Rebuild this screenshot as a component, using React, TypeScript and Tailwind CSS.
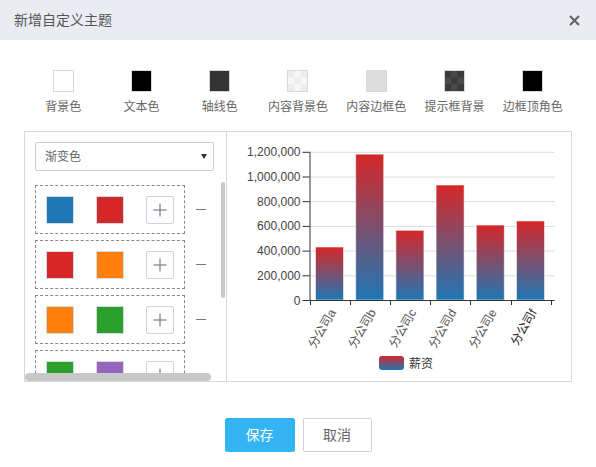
import React from "react";

const FONT = '"Liberation Sans", "Noto Sans CJK SC", Arial, sans-serif';

function Checker({ a, b }: { a: string; b: string }) {
  const cells = [];
  for (let r = 0; r < 3; r++)
    for (let c = 0; c < 3; c++)
      cells.push(
        <rect key={`${r}-${c}`} x={c * 7} y={r * 7.33} width={7} height={7.34} fill={(r + c) % 2 === 0 ? a : b} />
      );
  return (
    <svg width="100%" height="100%" viewBox="0 0 21 22" preserveAspectRatio="none">
      {cells}
    </svg>
  );
}

const topSwatches: { label: string; node: React.ReactNode; cls: string }[] = [
  { label: "背景色", node: null, cls: "bg-white" },
  { label: "文本色", node: null, cls: "bg-black" },
  { label: "轴线色", node: null, cls: "bg-[#333333]" },
  { label: "内容背景色", node: <Checker a="#ececec" b="#f7f7f7" />, cls: "bg-[#f2f2f2]" },
  { label: "内容边框色", node: null, cls: "bg-[#dddddd]" },
  { label: "提示框背景", node: <Checker a="#3a3a3a" b="#4a4a4a" />, cls: "bg-[#404040]" },
  { label: "边框顶角色", node: null, cls: "bg-black" },
];

const groups: [string, string][] = [
  ["#1f77b4", "#d62728"],
  ["#d62728", "#ff7f0e"],
  ["#ff7f0e", "#2ca02c"],
  ["#2ca02c", "#9467bd"],
];

const data = [
  { name: "分公司a", v: 429000 },
  { name: "分公司b", v: 1181000 },
  { name: "分公司c", v: 564000 },
  { name: "分公司d", v: 931000 },
  { name: "分公司e", v: 607000 },
  { name: "分公司f", v: 640000 },
];

function Chart() {
  const x0 = 82.5;
  const xEnd = 323.7;
  const band = (xEnd - x0) / 6;
  const yZero = 168;
  const yTop = 19.8;
  const max = 1200000;
  const sy = (v: number) => yZero - ((yZero - yTop) * v) / max;
  const ticks = [0, 200000, 400000, 600000, 800000, 1000000, 1200000];
  return (
    <svg width="344" height="249" viewBox="0 0 344 249" style={{ fontFamily: FONT }}>
      <defs>
        <linearGradient id="g" x1="0" y1="0" x2="0" y2="1">
          <stop offset="0%" stopColor="#d62728" />
          <stop offset="100%" stopColor="#1f77b4" />
        </linearGradient>
      </defs>
      {ticks.map((t) => (
        <g key={t}>
          {t > 0 && <line x1={x0} x2={xEnd + 4} y1={sy(t) + 0.5} y2={sy(t) + 0.5} stroke="#dcdcdc" />}
          <line x1={x0 - 7} x2={x0} y1={sy(t) + 0.5} y2={sy(t) + 0.5} stroke="#333" />
          <text x={x0 - 9} y={sy(t) + 4.5} textAnchor="end" fontSize="12" fill="#444">
            {t.toLocaleString("en-US")}
          </text>
        </g>
      ))}
      {data.map((d, i) => {
        const bx = x0 + band * i + 6;
        const top = sy(d.v);
        return (
          <rect
            key={d.name}
            x={bx}
            y={top}
            width={28}
            height={yZero - top}
            fill="url(#g)"
            stroke="rgba(255,255,255,0.55)"
            strokeWidth={1}
          />
        );
      })}
      <line x1={x0 + 0.5} x2={x0 + 0.5} y1={yTop} y2={yZero + 0.5} stroke="#333" />
      <line x1={x0} x2={xEnd + 4} y1={yZero + 0.5} y2={yZero + 0.5} stroke="#333" />
      {Array.from({ length: 7 }).map((_, i) => {
        const x = Math.round(x0 + band * i) + 0.5;
        return <line key={i} x1={x} x2={x} y1={yZero} y2={yZero + 5} stroke="#333" />;
      })}
      {data.map((d, i) => {
        const cx = x0 + band * i + band / 2 + 3;
        return (
          <text
            key={d.name}
            transform={`translate(${cx},${yZero + 10}) rotate(-60)`}
            textAnchor="end"
            dy="0.35em"
            fontSize="12"
            fill={i === 5 ? "#222" : "#555"}
          >
            {d.name}
          </text>
        );
      })}
      <rect x={152} y={224} width={25} height={14} rx={3} fill="url(#g)" />
      <text x={182} y={235.5} fontSize="12" fill="#333">
        薪资
      </text>
    </svg>
  );
}

export default function App() {
  return (
    <div className="w-[596px] h-[467px] bg-white" style={{ fontFamily: FONT }}>
      <div className="h-10 bg-[#e9edf2] flex items-center justify-between pl-[14px] pr-[16px]">
        <span className="text-[14px] text-[#555]">新增自定义主题</span>
        <svg width="11" height="11" viewBox="0 0 11 11">
          <path d="M1 1 L10 10 M10 1 L1 10" stroke="#666" strokeWidth="2.2" />
        </svg>
      </div>

      <div className="px-6 pt-[30px] grid grid-cols-7">
        {topSwatches.map((s) => (
          <div key={s.label} className="flex flex-col items-center">
            <div className={`w-[21px] h-[22px] border border-[#d3d9e2] overflow-hidden ${s.cls}`}>{s.node}</div>
            <div className="mt-[7px] text-[12px] leading-4 text-[#666] whitespace-nowrap">{s.label}</div>
          </div>
        ))}
      </div>

      <div className="mx-6 mt-4 h-[251px] border border-[#d3d9e2] flex">
        <div className="relative w-[202px] h-full border-r border-[#d3d9e2] overflow-hidden">
          <div className="ml-[10px] mt-[10px] w-[179px] h-[29px] border border-[#c6ced8] rounded-[2px] flex items-center justify-between pl-[9px] pr-[6px]">
            <span className="text-[12px] text-[#666]">渐变色</span>
            <svg width="6" height="5" viewBox="0 0 6 5">
              <path d="M0 0 L6 0 L3 5 Z" fill="#333" />
            </svg>
          </div>
          <div className="pl-[10px] pt-[14px] flex flex-col gap-[6px]">
            {groups.map(([a, b], i) => (
              <div key={i} className="flex items-center">
                <div className="w-[150px] h-[49px] shrink-0 border border-dashed border-[#888] px-[10px] flex items-center gap-[22px]">
                  <div className="w-[28px] h-[28px] border border-[#d5dbe3]" style={{ background: a }} />
                  <div className="w-[28px] h-[28px] border border-[#d5dbe3]" style={{ background: b }} />
                  <div className="w-[28px] h-[28px] border border-[#ccd5e0] rounded-[2px] flex items-center justify-center">
                    <svg width="14" height="14" viewBox="0 0 14 14">
                      <path d="M7 0.5 V13.5 M0.5 7 H13.5" stroke="#666" strokeWidth="1" />
                    </svg>
                  </div>
                </div>
                <div className="ml-[11px] w-[10px] h-px bg-[#777]" />
              </div>
            ))}
          </div>
          <div className="absolute left-[196px] top-[50px] w-[4px] h-[116px] bg-[#c8c8c8] rounded-sm" />
          <div className="absolute left-0 top-[241px] w-[186px] h-[8px] bg-[#c8c8c8] rounded-full" />
        </div>
        <div className="flex-1">
          <Chart />
        </div>
      </div>

      <div className="mt-[36px] flex justify-center gap-2">
        <button className="w-[70px] h-[34px] bg-[#35b4f4] text-white text-[14px] rounded-[2px]">保存</button>
        <button className="w-[69px] h-[34px] border border-[#ccd3dd] bg-white text-[#666] text-[14px] rounded-[2px]">
          取消
        </button>
      </div>
    </div>
  );
}
